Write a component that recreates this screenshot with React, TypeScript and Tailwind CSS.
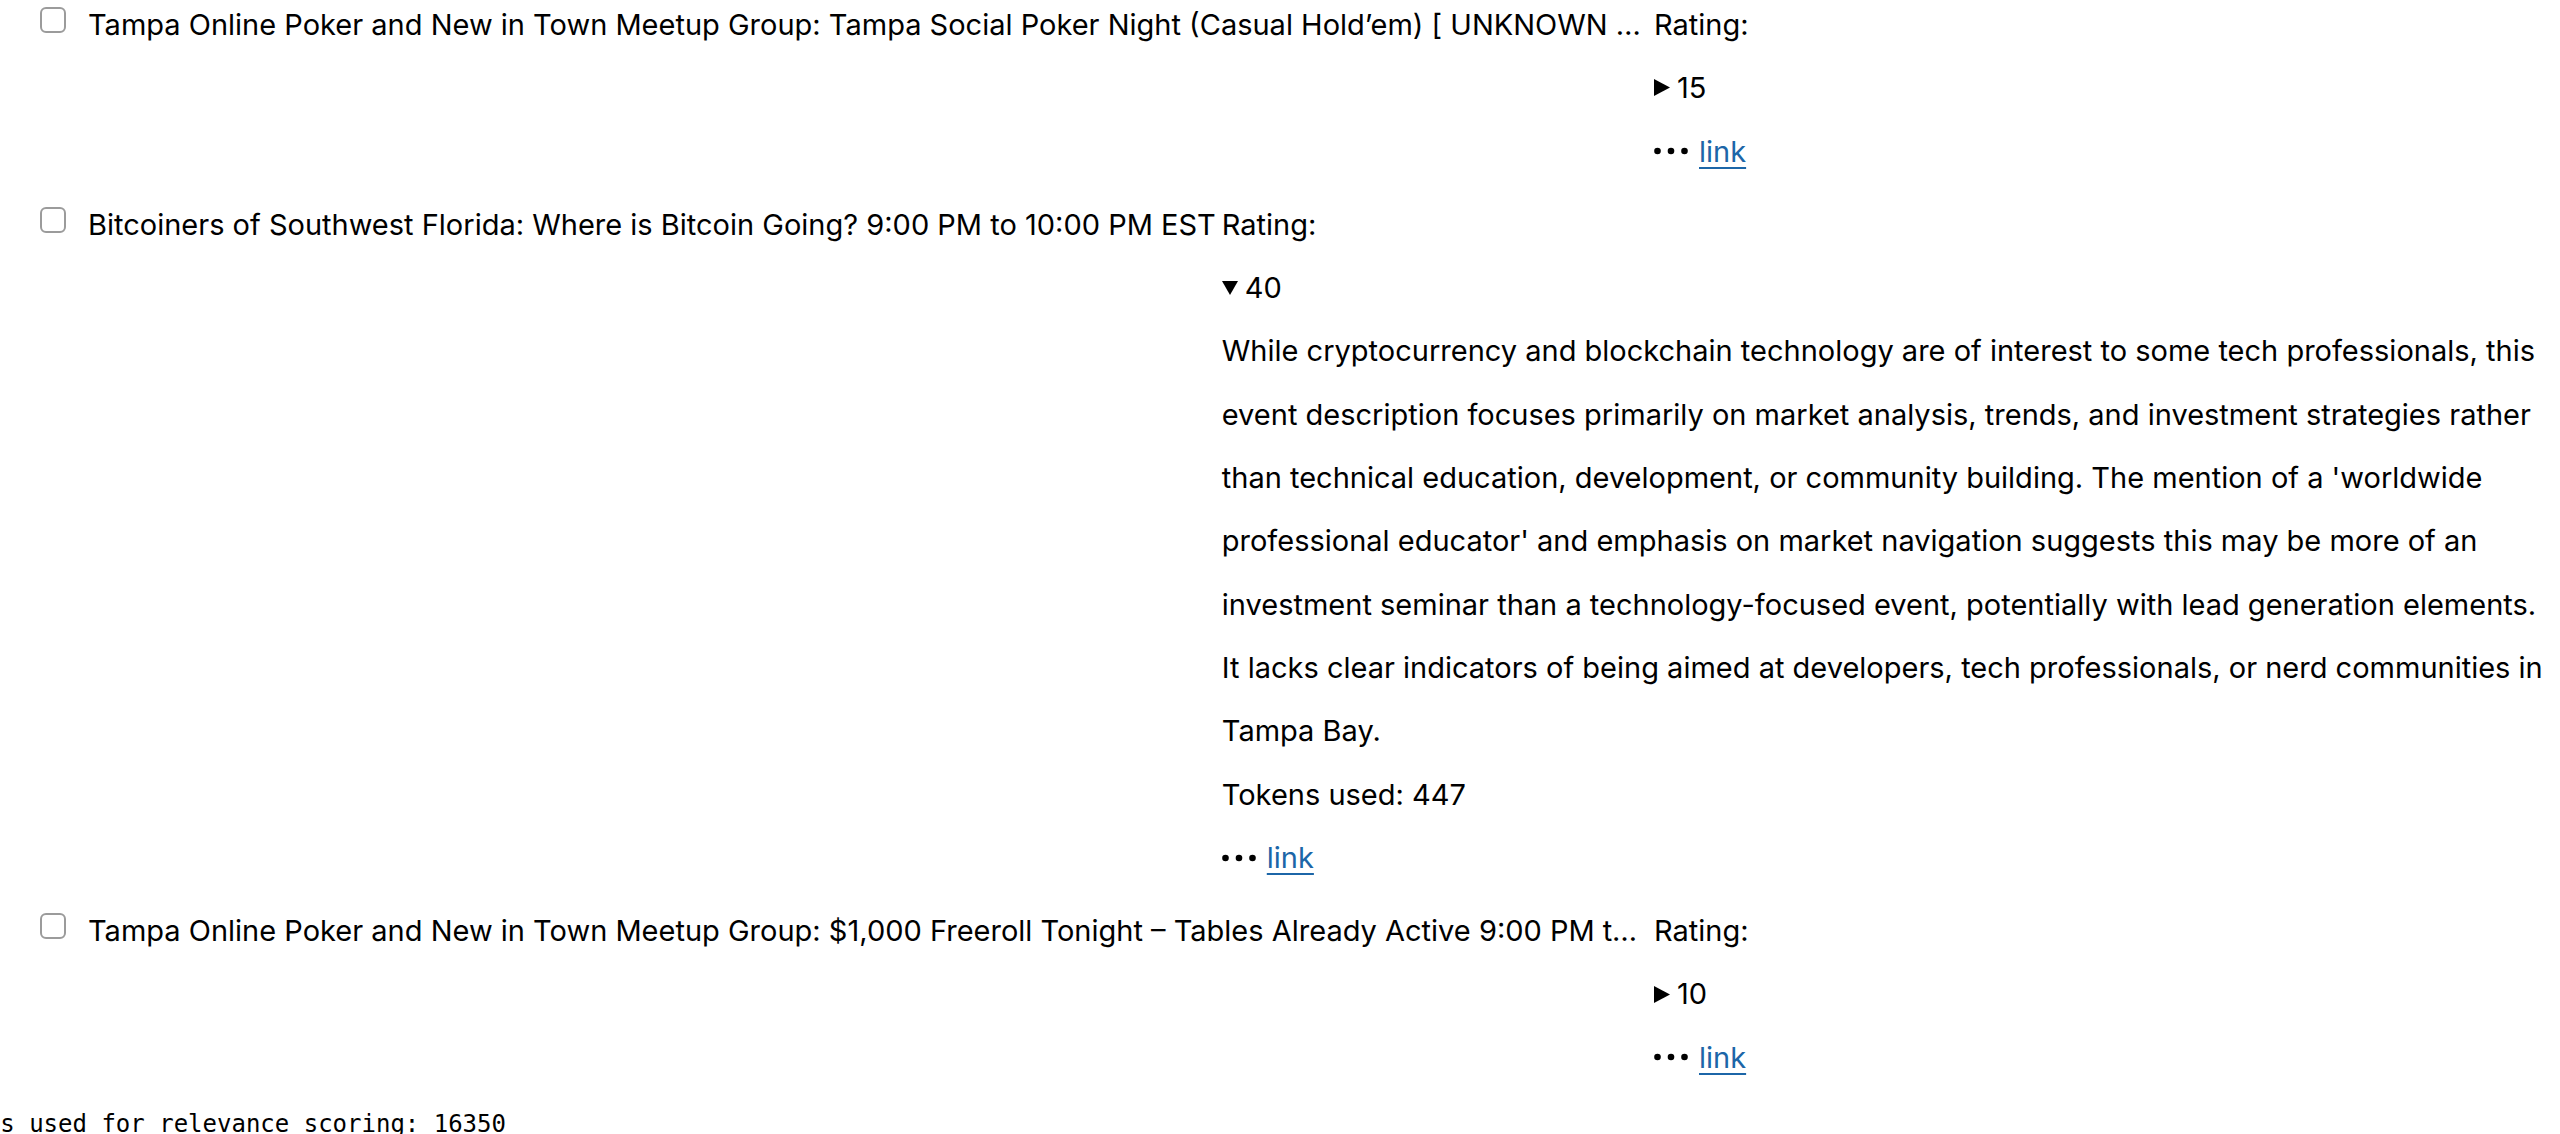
import React from 'react'

type Event = {
  id: number
  title: string
  rating: number
  open?: boolean
  reason?: string
  tokens?: number
}

const events: Event[] = [
  {
    id: 1,
    title:
      'Tampa Online Poker and New in Town Meetup Group: Tampa Social Poker Night (Casual Hold’em) [ UNKNOWN DAY ] 7:00 PM to 10:00 PM EST',
    rating: 15,
  },
  {
    id: 2,
    title: 'Bitcoiners of Southwest Florida: Where is Bitcoin Going? 9:00 PM to 10:00 PM EST',
    rating: 40,
    open: true,
    reason:
      "While cryptocurrency and blockchain technology are of interest to some tech professionals, this event description focuses primarily on market analysis, trends, and investment strategies rather than technical education, development, or community building. The mention of a 'worldwide professional educator' and emphasis on market navigation suggests this may be more of an investment seminar than a technology-focused event, potentially with lead generation elements. It lacks clear indicators of being aimed at developers, tech professionals, or nerd communities in Tampa Bay.",
    tokens: 447,
  },
  {
    id: 3,
    title:
      'Tampa Online Poker and New in Town Meetup Group: $1,000 Freeroll Tonight – Tables Already Active 9:00 PM to 11:00 PM EST',
    rating: 10,
  },
]

function Triangle({ open }: { open?: boolean }) {
  if (open) {
    return (
      <svg width="16" height="14" viewBox="0 0 16 14" className="shrink-0">
        <polygon points="0,0 16,0 8,14" fill="black" />
      </svg>
    )
  }
  return (
    <svg width="16" height="17" viewBox="0 0 16 17" className="shrink-0">
      <polygon points="0,0 16,8.5 0,17" fill="black" />
    </svg>
  )
}

function Dots() {
  return (
    <svg width="34" height="8" viewBox="0 0 34 8" className="shrink-0">
      <circle cx="3.5" cy="4" r="3.3" fill="black" />
      <circle cx="17" cy="4" r="3.3" fill="black" />
      <circle cx="30.5" cy="4" r="3.3" fill="black" />
    </svg>
  )
}

export default function App() {
  return (
    <div className="min-h-screen overflow-hidden bg-white font-['Inter','Noto_Sans',sans-serif] text-[29px] leading-[63.3px] text-black">
      <ul className="-mt-[7px] flex flex-col gap-[10px]">
        {events.map(ev => (
          <li key={ev.id} className="flex items-start">
            <input
              type="checkbox"
              className="ml-[40px] mt-[14px] h-[26px] w-[26px] shrink-0 appearance-none rounded-[6px] border-2 border-[#9b9b9b] bg-white"
            />
            <span className="ml-[22px] max-w-[1560px] shrink-0 truncate">{ev.title}</span>
            <div className="ml-[6px] min-w-0 flex-1 pr-[10px]">
              <div>Rating:</div>
              <details open={ev.open}>
                <summary className="flex list-none items-center gap-[7px] [&::-webkit-details-marker]:hidden">
                  <Triangle open={ev.open} />
                  <span>{ev.rating}</span>
                </summary>
                {ev.reason && <p>{ev.reason}</p>}
                {ev.tokens && <p>Tokens used: {ev.tokens}</p>}
              </details>
              <div className="flex items-center gap-[11px]">
                <Dots />
                <a href="#" className="text-[#1c66a8] underline decoration-2 underline-offset-[5px]">
                  link
                </a>
              </div>
            </div>
          </li>
        ))}
      </ul>
      <pre className="-ml-[72px] mt-[21px] font-['DejaVu_Sans_Mono','Liberation_Mono',monospace] text-[24px] leading-[28px]">
        Tokens used for relevance scoring: 16350
      </pre>
    </div>
  )
}
